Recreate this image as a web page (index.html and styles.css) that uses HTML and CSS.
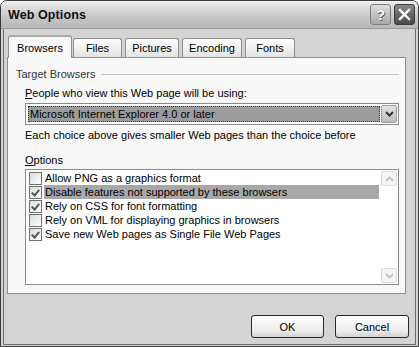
FILE: index.html
```html
<!DOCTYPE html>
<html>
<head>
<meta charset="utf-8">
<link rel="stylesheet" href="styles.css">
</head>
<body>
<div class="window">
  <div class="titlebar">
    <span class="title">Web Options</span>
    <div class="tbtns">
      <span class="tbtn help">?</span>
      <span class="tbtn close">
        <svg width="15" height="15" viewBox="0 0 15 15"><path d="M3 3 L12 12 M12 3 L3 12" stroke="#fff" stroke-width="2.4" stroke-linecap="square"/></svg>
      </span>
    </div>
  </div>
  <div class="frame">
    <div class="tabs">
      <span class="tab active">Browsers</span>
      <span class="tab">Files</span>
      <span class="tab">Pictures</span>
      <span class="tab">Encoding</span>
      <span class="tab">Fonts</span>
    </div>
    <div class="panel">
      <div class="group-title"><span>Target Browsers</span><span class="rule"></span></div>
      <div class="indent">
        <div class="label"><u>P</u>eople who view this Web page will be using:</div>
        <div class="combo">
          <div class="combo-val"><span class="sel">Microsoft Internet Explorer 4.0 or later</span></div>
          <div class="combo-btn">
            <svg width="9" height="6" viewBox="0 0 9 6"><path d="M1 1 L4.5 4.5 L8 1" stroke="#333" stroke-width="2" fill="none"/></svg>
          </div>
        </div>
        <div class="note">Each choice above gives smaller Web pages than the choice before</div>
        <div class="label opts"><u>O</u>ptions</div>
        <div class="list">
          <div class="items">
            <div class="row"><span class="cb"></span><span class="txt">Allow PNG as a graphics format</span></div>
            <div class="row"><span class="cb on"></span><span class="txt hl">Disable features not supported by these browsers</span></div>
            <div class="row"><span class="cb on"></span><span class="txt">Rely on CSS for font formatting</span></div>
            <div class="row"><span class="cb"></span><span class="txt">Rely on VML for displaying graphics in browsers</span></div>
            <div class="row"><span class="cb on"></span><span class="txt">Save new Web pages as Single File Web Pages</span></div>
          </div>
          <div class="vscroll">
            <span class="sbtn"><svg width="9" height="6" viewBox="0 0 9 6"><path d="M1 5 L4.5 1.5 L8 5" stroke="#c4c4c4" stroke-width="2" fill="none"/></svg></span>
            <span class="sbtn"><svg width="9" height="6" viewBox="0 0 9 6"><path d="M1 1 L4.5 4.5 L8 1" stroke="#c4c4c4" stroke-width="2" fill="none"/></svg></span>
          </div>
        </div>
      </div>
    </div>
    <div class="buttons">
      <span class="btn">OK</span>
      <span class="btn">Cancel</span>
    </div>
  </div>
</div>
</body>
</html>
```
FILE: styles.css
```css
* { box-sizing: border-box; }
html, body { margin: 0; padding: 0; background: #fff; }
body {
  font-family: "Liberation Sans", Arial, sans-serif;
  font-size: 11px;
  color: #000;
}
.window {
  width: 419px;
  height: 347px;
  border: 1px solid #3a3a3a;
  border-radius: 7px 7px 0 0;
  background: #d4d4d4;
  display: flex;
  flex-direction: column;
  overflow: hidden;
}
.titlebar {
  height: 28px;
  flex: none;
  display: flex;
  align-items: center;
  justify-content: space-between;
  padding: 0 3px 0 7px;
  background: linear-gradient(#f2f2f2 0%, #dcdcdc 25%, #c6c6c6 60%, #b8b8b8 100%);
  border-bottom: 1px solid #9a9a9a;
}
.title {
  font-weight: bold;
  font-size: 12.5px;
  letter-spacing: 0.1px;
  color: #111;
}
.tbtns { display: flex; gap: 3px; }
.tbtn {
  width: 21px;
  height: 21px;
  border-radius: 3px;
  display: flex;
  align-items: center;
  justify-content: center;
}
.help {
  background: linear-gradient(#dedede, #a8a8a8);
  border: 1px solid #7a7a7a;
  color: #fff;
  font-weight: bold;
  font-size: 15px;
  text-shadow: 0 0 1px #555, 1px 1px 0 #666;
}
.close {
  background: linear-gradient(#8a8a8a, #4a4a4a);
  border: 1px solid #3a3a3a;
}
.frame {
  flex: 1;
  margin: 0 2px 1px;
  border: 1px solid #6a6a6a;
  border-top: none;
  padding: 6px 6px 0 3px;
  display: flex;
  flex-direction: column;
}
.tabs {
  display: flex;
  align-items: flex-end;
  height: 22px;
  padding-left: 1px;
  gap: 3px;
}
.tab {
  height: 19px;
  padding: 0 10px;
  display: flex;
  align-items: center;
  justify-content: center;
  background: linear-gradient(#fefefe, #e4e4e4);
  border: 1px solid #8e8e8e;
  border-bottom: none;
  border-radius: 3px 3px 0 0;
}
.tab:nth-child(2) { width: 49px; margin-left: -2px; }
.tab:nth-child(3) { width: 54px; }
.tab:nth-child(4) { width: 60px; }
.tab:nth-child(5) { width: 50px; }
.tab.active {
  width: 64px;
  background: #f8f8f8;
  border-top: 2px solid #a8a8a8;
  position: relative;
  z-index: 1;
  margin-bottom: -1px;
  height: 23px;
  padding-top: 1px;
}
.panel {
  width: 399px;
  height: 237px;
  background: #f8f8f8;
  border: 1px solid #8e8e8e;
  padding: 9px 0 0 8px;
}
.group-title {
  display: flex;
  align-items: center;
  height: 14px;
  padding-right: 6px;
  color: #333;
}
.rule {
  flex: 1;
  height: 1px;
  background: #c4c4c4;
  margin-left: 6px;
}
.indent { padding-left: 9px; }
.label { margin-top: 5px; height: 14px; line-height: 14px; }
.combo {
  margin-top: 3px;
  width: 374px;
  height: 22px;
  border: 1px solid #8a8a8a;
  background: #fff;
  display: flex;
  padding: 1px;
}
.combo-val {
  flex: 1;
  display: flex;
  padding: 1px;
}
.sel {
  flex: 1;
  background: #9c9c9c;
  outline: 1px dotted #333;
  outline-offset: -1px;
  line-height: 16px;
  padding-left: 2px;
}
.combo-btn {
  width: 16px;
  background: linear-gradient(#e4e4e4, #bcbcbc);
  border: 1px solid #9a9a9a;
  border-radius: 2px;
  display: flex;
  align-items: center;
  justify-content: center;
}
.note { margin-top: 3px; height: 14px; line-height: 14px; }
.opts { margin-top: 11px; }
.list {
  margin-top: 2px;
  width: 374px;
  height: 116px;
  border: 1px solid #8a8a8a;
  background: #fff;
  display: flex;
  padding: 1px;
}
.items { flex: 1; padding-left: 2px; }
.row {
  display: flex;
  align-items: center;
  height: 14px;
}
.cb {
  width: 13px;
  height: 13px;
  border: 1px solid #707070;
  background: linear-gradient(135deg, #dcdcdc, #fff);
  flex: none;
  margin-right: 2px;
  position: relative;
}
.cb.on::after {
  content: "";
  position: absolute;
  left: 3px;
  top: 1px;
  width: 3px;
  height: 6px;
  border: solid #555;
  border-width: 0 2px 2px 0;
  transform: rotate(40deg);
}
.txt { line-height: 14px; padding-left: 1px; }
.hl { flex: 1; background: #a8a8a8; margin-right: 2px; }
.vscroll {
  width: 16px;
  display: flex;
  flex-direction: column;
  justify-content: space-between;
}
.sbtn {
  height: 15px;
  background: #f4f4f4;
  border: 1px solid #dcdcdc;
  border-radius: 2px;
  display: flex;
  align-items: center;
  justify-content: center;
}
.buttons {
  display: flex;
  justify-content: flex-end;
  gap: 11px;
  margin-top: 21px;
}
.btn {
  width: 73px;
  height: 23px;
  border: 1px solid #2a2a2a;
  border-radius: 3px;
  background: linear-gradient(#fdfdfd, #ececec 70%, #d0d0d0);
  display: flex;
  align-items: center;
  justify-content: center;
}
.btn:last-child { width: 74px; }
```
